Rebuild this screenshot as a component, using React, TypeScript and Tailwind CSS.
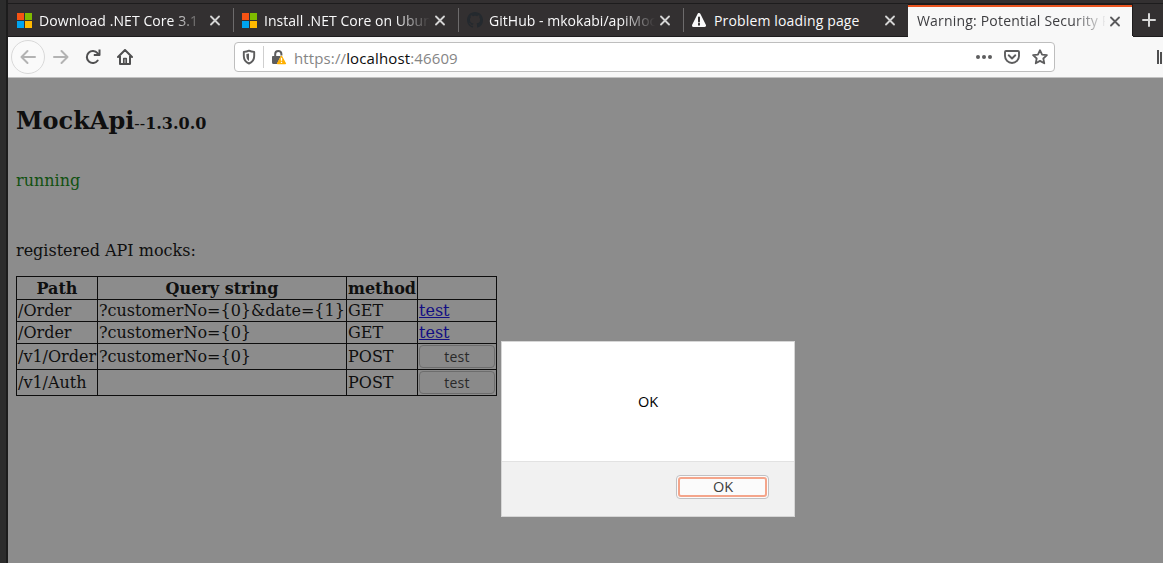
import React from 'react';

function Close({ dark = false }: { dark?: boolean }) {
  return (
    <svg className={`mr-[12px] h-[11px] w-[11px] shrink-0 ${dark ? 'text-[#5a5a5c]' : 'text-[#d4d4d4]'}`} viewBox="0 0 11 11" fill="none" stroke="currentColor" strokeWidth="1.8" strokeLinecap="round">
      <path d="M1 1.500l8 8M9 1.500L1 9.500" />
    </svg>
  );
}

function Microsoft() {
  return (
    <svg className="h-[15px] w-[15px]" viewBox="0 0 15 15" shapeRendering="crispEdges">
      <path fill="#f65314" d="M0 0h7v7H0z" />
      <path fill="#7fba00" d="M8 0h7v7H8z" />
      <path fill="#00a4ef" d="M0 8h7v7H0z" />
      <path fill="#ffb900" d="M8 8h7v7H8z" />
    </svg>
  );
}

function GitHub() {
  return (
    <svg className="h-[16px] w-[16px]" viewBox="0 0 16 16" fill="#24292e">
      <path d="M8 0C3.58 0 0 3.58 0 8c0 3.54 2.29 6.53 5.47 7.59.4.07.55-.17.55-.38 0-.19-.01-.82-.01-1.49-2.01.37-2.53-.49-2.69-.94-.09-.23-.48-.94-.82-1.13-.28-.15-.68-.52-.01-.53.63-.01 1.08.58 1.23.82.72 1.21 1.87.87 2.33.66.07-.52.28-.87.51-1.07-1.78-.2-3.64-.89-3.64-3.95 0-.87.31-1.59.82-2.15-.08-.2-.36-1.02.08-2.12 0 0 .67-.21 2.2.82.64-.18 1.32-.27 2-.27s1.36.09 2 .27c1.53-1.04 2.2-.82 2.2-.82.44 1.1.16 1.92.08 2.12.51.56.82 1.27.82 2.15 0 3.07-1.87 3.75-3.65 3.95.29.25.54.73.54 1.48 0 1.07-.01 1.93-.01 2.2 0 .21.15.46.55.38A8.01 8.01 0 0 0 16 8c0-4.42-3.58-8-8-8z" />
    </svg>
  );
}

function Warning() {
  return (
    <svg className="h-[14px] w-[14px]" viewBox="0 0 14 14">
      <path d="M7 1.500L12.500 12.500H1.500z" fill="#f9f9fa" stroke="#f9f9fa" strokeWidth="3" strokeLinejoin="round" />
      <path d="M7 4.600v4M7 10.700v1" stroke="#333031" strokeWidth="2" strokeLinecap="round" />
    </svg>
  );
}

const tabs = [
  { title: 'Download .NET Core 3.1', icon: <Microsoft />, spacing: 'tracking-[0.08px]' },
  { title: 'Install .NET Core on Ubuntu', icon: <Microsoft />, spacing: 'tracking-[0.03px]' },
  { title: 'GitHub - mkokabi/apiMock', icon: <GitHub />, spacing: 'tracking-[0.03px]' },
  { title: 'Problem loading page', icon: <Warning />, spacing: 'tracking-[0.15px]' },
];

function TabBar() {
  return (
    <div className="flex h-[33px] shrink-0 border-b border-[#1d1c1d] bg-[#333031] text-[14px] text-[#f9f9fa]">
      {tabs.map((tab, i) => (
        <div key={tab.title} className="flex w-[225px] shrink-0 items-center">
          <span className="ml-[9px] flex w-[22px] shrink-0 items-center">{tab.icon}</span>
          <span className={`mr-[3px] w-[168px] shrink-0 overflow-hidden whitespace-nowrap pt-[2px] leading-[30px] ${i === 3 ? '' : '[mask-image:linear-gradient(to_right,black_132px,transparent_166px)]'} ${tab.spacing}`}>
            {tab.title}
          </span>
          <Close />
          <span className={`w-px shrink-0 ${i === 3 ? 'h-full bg-[#1d1c1d]' : 'h-[24px] bg-[#6d6b6c]'}`} />
        </div>
      ))}
      <div className="-mb-px flex w-[224px] shrink-0 border-t border-[#1d1c1d]">
        <div className="flex flex-1 items-center border-t-2 border-[#e95420] bg-[#f8f8f8] pb-[2px] text-[#3d3d40]">
          <span className="ml-[9px] mr-[5px] w-[188px] shrink-0 overflow-hidden whitespace-nowrap leading-[28px] tracking-[0.19px] [mask-image:linear-gradient(to_right,black_155px,transparent_190px)]">
            Warning: Potential Security Risk
          </span>
          <Close dark />
        </div>
      </div>
      <div className="flex w-[31px] items-center border-l border-[#1d1c1d] pl-[9px]">
        <svg className="h-[14px] w-[14px]" viewBox="0 0 14 14" stroke="#d8d8d8" strokeWidth="2" strokeLinecap="round">
          <path d="M7 1v12M1 7h12" />
        </svg>
      </div>
    </div>
  );
}

function Toolbar() {
  return (
    <div className="flex h-[41px] shrink-0 items-center border-b border-[#c2c2c2] bg-[#f8f8f8]">
      <div className="ml-[3px] flex h-[34px] w-[34px] shrink-0 items-center justify-center rounded-full border border-[#d9d9d9] bg-[#fafafa]">
        <svg className="h-4 w-4" viewBox="0 0 16 16" fill="none" stroke="#b3b3b3" strokeWidth="2" strokeLinecap="round" strokeLinejoin="round">
          <path d="M15 8H1.5M7.5 2l-6 6 6 6" />
        </svg>
      </div>
      <svg className="ml-2 h-4 w-4 shrink-0" viewBox="0 0 16 16" fill="none" stroke="#b3b3b3" strokeWidth="2" strokeLinecap="round" strokeLinejoin="round">
        <path d="M1 8h13.5M8.500 2l6 6-6 6" />
      </svg>
      <svg className="ml-4 h-4 w-4 shrink-0" viewBox="0 0 16 16" fill="none" stroke="#4f4f50" strokeWidth="2" strokeLinecap="round" strokeLinejoin="round">
        <path d="M12.700 11.500A6 6 0 1 1 12.500 4.200L14 5.800" />
        <path d="M14.500 1.500V6H9.800" strokeLinecap="square" />
      </svg>
      <svg className="ml-4 h-4 w-4 shrink-0" viewBox="0 0 16 16" fill="none" stroke="#4f4f50" strokeWidth="2" strokeLinecap="round" strokeLinejoin="round">
        <path d="M1 8l7-7 7 7M3 7v8h10V7" />
        <path d="M6.800 14V9.500h2.400V14" strokeWidth="1.700" />
      </svg>
      <div className="ml-[101px] flex h-[30px] w-[821px] shrink-0 items-center rounded-[4px] border border-[#bebebe] bg-white">
        <svg className="ml-[6px] h-4 w-4 shrink-0" viewBox="0 0 16 16">
          <path d="M8 1.600c1.800.9 3.600 1.200 5.200 1.300V7c0 3.900-2 6.300-5.200 7.500C4.800 13.300 2.800 10.900 2.800 7V2.900C4.400 2.800 6.200 2.500 8 1.600z" fill="none" stroke="#5d5d5e" strokeWidth="1.900" strokeLinejoin="round" />
          <path d="M8 4.500v7.400C6.300 10.900 5.400 9.300 5.400 7V5.100C6.300 5 7.200 4.800 8 4.500z" fill="#5d5d5e" />
        </svg>
        <span className="ml-[6px] h-[22px] w-px shrink-0 bg-[#cfcfcf]" />
        <svg className="ml-[7px] h-4 w-4 shrink-0" viewBox="0 0 16 16">
          <path d="M4.200 8V5a3.100 3.100 0 0 1 6.200 0v1.500" fill="none" stroke="#5d5d5e" strokeWidth="2" />
          <path d="M1.800 7h8L6 15H2.500A1.500 1.500 0 0 1 1 13.500V8a1 1 0 0 1 .8-1z" fill="#5d5d5e" />
          <path d="M10.500 7.400l3.900 7.100H6.600z" fill="#ffb000" stroke="#ffb000" strokeWidth="1.400" strokeLinejoin="round" />
          <path d="M10.500 8.800v2.900M10.500 12.800v1.200" stroke="white" strokeWidth="1.300" />
        </svg>
        <span className="ml-[7px] w-[680px] whitespace-nowrap pt-px text-[15px] leading-[20px] tracking-[0.13px] text-[#858585]">
          https://<span className="text-[#0c0c0d]">localhost</span>:46609
        </span>
        <svg className="ml-[2px] h-4 w-4 shrink-0" viewBox="0 0 16 16" fill="#5d5d5e">
          <circle cx="2" cy="8" r="2" /><circle cx="8" cy="8" r="2" /><circle cx="14" cy="8" r="2" />
        </svg>
        <svg className="ml-3 h-4 w-4 shrink-0" viewBox="0 0 16 16" fill="none" stroke="#5d5d5e" strokeWidth="1.900" strokeLinecap="round" strokeLinejoin="round">
          <path d="M2 2h12a1 1 0 0 1 1 1v4a7 7 0 0 1-14 0V3a1 1 0 0 1 1-1zM4.700 6.300L8 9.500l3.300-3.200" />
        </svg>
        <svg className="ml-3 h-4 w-4 shrink-0" viewBox="0 0 16 16" fill="none" stroke="#5d5d5e" strokeWidth="1.800" strokeLinejoin="round">
          <path d="M8 1.200l2.050 4.400 4.850.6-3.580 3.300.95 4.800L8 11.900l-4.270 2.400.95-4.800L1.100 6.200l4.850-.6z" />
        </svg>
      </div>
      <svg className="ml-[101px] h-4 w-[7px] shrink-0" viewBox="0 0 7 16" shapeRendering="crispEdges">
        <path d="M1 1h2v14H1zM4 3h2v12H4z" fill="#4f4f50" />
      </svg>
    </div>
  );
}

const rows = [
  { path: '/Order', query: '?customerNo={0}&date={1}', method: 'GET' },
  { path: '/Order', query: '?customerNo={0}', method: 'GET' },
  { path: '/v1/Order', query: '?customerNo={0}', method: 'POST' },
  { path: '/v1/Auth', query: '', method: 'POST' },
];

const cell = 'border-b border-r border-[#0d0d0d] py-0 pl-px pr-0 align-middle';
const head = 'border-b border-r border-[#0d0d0d] p-0 align-middle';

function MockPage() {
  return (
    <main className="min-h-0 flex-1 bg-[#8c8c8c] pl-2 pt-[29px] font-['DejaVu_Serif',serif] text-[16px] leading-[19px] text-[#0f0f0f]">
      <h1 className="h-[28px] whitespace-nowrap text-[24px] font-bold leading-[28px]">
        MockApi<span className="text-[16px] font-normal">--</span><span className="text-[16px]">1.3.0.0</span>
      </h1>
      <p className="mt-[36px] text-[#115111]">running</p>
      <p className="mt-[51px]">registered API mocks:</p>
      <table className="mt-[16px] w-[481px] table-fixed border-separate border-spacing-0 whitespace-nowrap border-l border-t border-[#0d0d0d]">
        <colgroup>
          <col className="w-[81px]" />
          <col className="w-[249px]" />
          <col className="w-[71px]" />
          <col className="w-[79px]" />
        </colgroup>
        <thead>
          <tr className="h-[23px]">
            <th className={head}>Path</th>
            <th className={head}>Query string</th>
            <th className={head}>method</th>
            <th className={head} />
          </tr>
        </thead>
        <tbody>
          {rows.map((row, i) => (
            <tr key={i} className={row.method === 'GET' ? 'h-[22px]' : 'h-[26px]'}>
              <td className={cell}>{row.path}</td>
              <td className={cell}>{row.query}</td>
              <td className={cell}>{row.method}</td>
              <td className={cell}>
                {row.method === 'GET' ? (
                  <a href="#" className="text-[#120e83] underline">test</a>
                ) : (
                  <button className="block h-[23px] w-[76px] rounded-[4px] border border-[#6d6d6d] bg-[#8a8a8a] font-['Open_Sans',sans-serif] text-[14px] leading-[20px] tracking-[0.3px] text-[#292929]">
                    test
                  </button>
                )}
              </td>
            </tr>
          ))}
        </tbody>
      </table>
    </main>
  );
}

function AlertDialog() {
  return (
    <div role="alertdialog" className="absolute left-[501px] top-[341px] flex h-[176px] w-[294px] flex-col border border-[#d6d6d6] bg-white text-[14.500px]">
      <div className="flex h-[119px] items-center justify-center text-black">OK</div>
      <div className="flex flex-1 justify-end border-t border-[#e2e2e2] bg-[#f1f1f1] pr-[25px] pt-[13px]">
        <button className="h-[24px] w-[93px] rounded-[4px] border border-[#c0c0c3] bg-[#fbfbfb] p-px">
          <span className="flex h-full items-center justify-center rounded-[3px] border-2 border-[#f4a58b] pl-px leading-none text-[#3d3d3d]">OK</span>
        </button>
      </div>
    </div>
  );
}

export default function App() {
  return (
    <div className="relative flex h-[563px] w-[1163px] overflow-hidden bg-[#2c2c2c] font-['Open_Sans',sans-serif]">
      <div className="w-[8px] shrink-0 border-r-2 border-[#1c1c1c] bg-[#2c2c2c]" />
      <div className="flex min-w-0 flex-1 flex-col">
        <div className="h-[4px] shrink-0 border-b border-[#1d1c1d] bg-[#333031]" />
        <TabBar />
        <Toolbar />
        <MockPage />
      </div>
      <AlertDialog />
    </div>
  );
}
